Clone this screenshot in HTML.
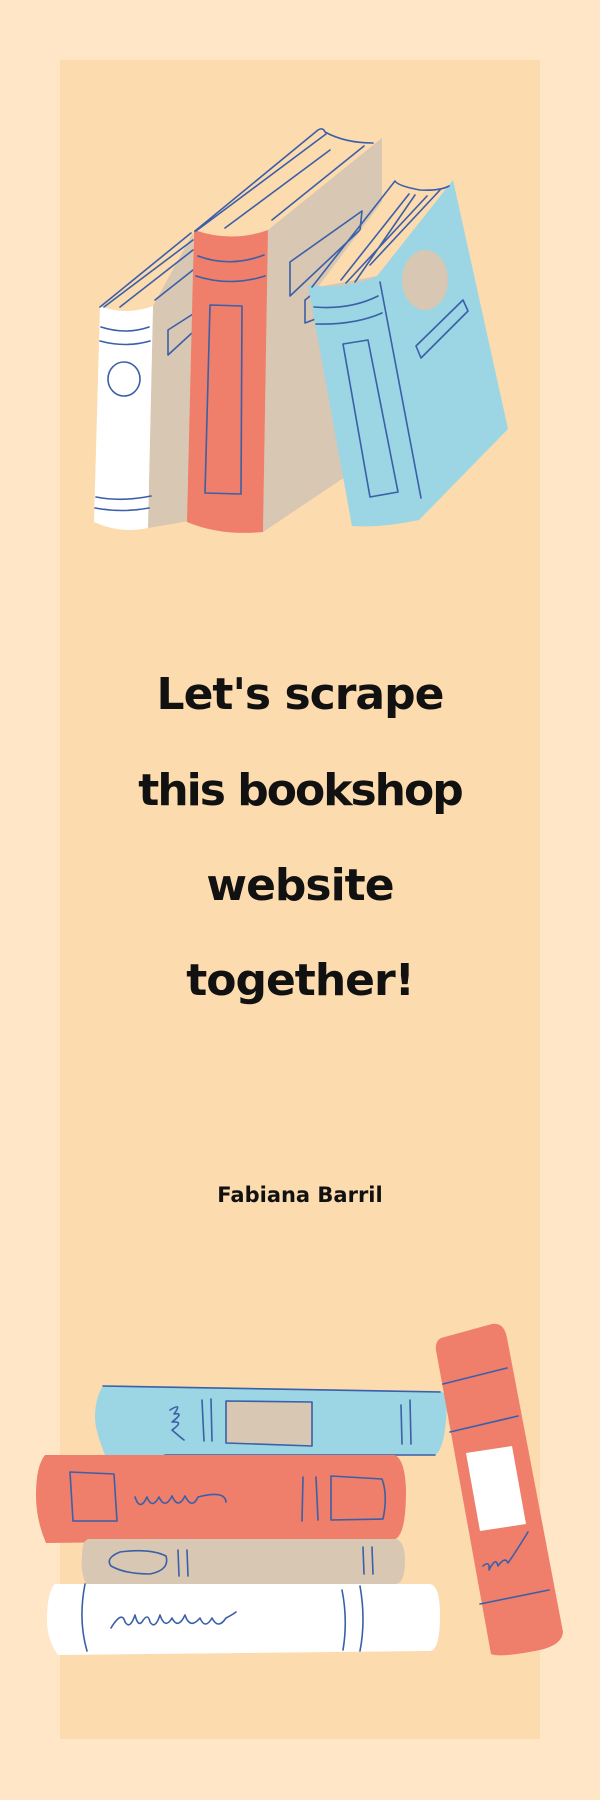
<!DOCTYPE html>
<html><head><meta charset="utf-8"><style>
html,body{margin:0;padding:0;background:#fee6c7;}
body{width:600px;height:1800px;position:relative;overflow:hidden;}
svg{position:absolute;left:0;top:0}
.t{position:absolute;left:60px;width:480px;text-align:center;font-family:"DejaVu Sans","Liberation Sans",sans-serif;font-weight:bold;color:#111;}
</style></head><body>
<svg width="600" height="1800" viewBox="0 0 600 1800">
<rect x="60" y="60" width="480" height="1679" fill="#fcdbae"/>
<g stroke="#3b5fa8" stroke-width="1.6" fill="none" stroke-linecap="round" stroke-linejoin="round">
<!-- white book -->
<polygon points="153,306 193,233 195,520 148,528" fill="#d8c7b2" stroke="none"/>
<path d="M100,306 Q126,316 153,306 L148,528 Q120,534 94,522 Z" fill="#fff" stroke="none"/>
<path d="M100,307 L191,233 M104,307 L193,240 M120,307 L193,250 M155,300 L193,270"/>
<path d="M101,327 Q126,335 149,327 M100,341 Q126,348 150,341 M96,497 Q122,502 151,496 M95,508 Q122,513 149,508"/>
<ellipse cx="124" cy="379" rx="16" ry="17"/>
<path d="M168,330 L193,314 L193,332 L168,355 Z"/>
<!-- red book tan cover -->
<polygon points="268,230 382,138 382,480 345,477 263,532" fill="#d8c7b2" stroke="none"/>
<path d="M194,230 Q232,243 268,230 L263,532 Q220,536 187,522 Z" fill="#ef7e6b" stroke="none"/>
<path d="M195,231 L318,130 Q323,127 325,132 Q345,143 373,143 M196,231 L326,134 M225,228 L330,150 M272,220 L364,146"/>
<path d="M198,256 Q230,268 264,255 M196,276 Q230,287 265,276"/>
<path d="M210,305 L242,306 L241,494 L205,493 Z"/>
<path d="M290,262 L362,211 L360,230 L290,296 Z"/>
<path d="M305,300 L314,293 L318,318 L305,323 Z"/>
<!-- blue book -->
<polygon points="318,287 396,183 450,186 377,276" fill="#fcdbae" stroke="none"/>
<path d="M308,285 Q345,290 377,276 L453,180 L508,429 L419,520 Q380,528 352,526 Z" fill="#9cd5e3" stroke="none"/>
<path d="M312,287 L395,181 Q398,186 420,190 Q440,191 449,186 M341,280 L409,194 M346,283 L427,196 M370,265 L440,190 M355,282 L415,195"/>
<ellipse cx="425" cy="280" rx="23" ry="30" fill="#d8c7b2" stroke="none"/>
<path d="M314,307 Q350,310 378,296 M316,324 Q355,325 382,313"/>
<path d="M343,344 L368,340 L398,492 L370,497 Z"/>
<path d="M380,282 L421,498"/>
<path d="M416,346 L463,300 L468,311 L421,358 Z"/>
<!-- bottom stack -->
<path d="M103,1386 L440,1391 Q447,1393 447,1405 Q445,1450 435,1455 L165,1455 L105,1455 Q95,1430 95,1418 Q95,1398 103,1386 Z" fill="#9cd5e3" stroke="none"/>
<path d="M103,1386 L440,1392 M165,1455 L435,1455"/>
<path d="M226,1401 L312,1402 L312,1446 L226,1443 Z" fill="#d8c7b2"/>
<path d="M202,1400 L204,1441 M211,1399 L212,1441 M401,1405 L402,1444 M410,1400 L411,1444"/>
<path d="M170,1410 Q183,1402 174,1414 Q185,1412 172,1422 Q185,1421 172,1430 Q180,1437 184,1440"/>
<path d="M45,1455 L395,1455 Q405,1460 406,1490 Q406,1535 395,1539 L46,1543 Q36,1520 36,1495 Q36,1466 45,1455 Z" fill="#ef7e6b" stroke="none"/>
<path d="M70,1472 L114,1474 L117,1521 L73,1521 Z"/>
<path d="M331,1476 L382,1479 Q388,1495 383,1519 L331,1520 Z"/>
<path d="M303,1477 L302,1521 M316,1477 L318,1520"/>
<path d="M135,1497 Q140,1512 147,1497 Q152,1510 159,1497 Q165,1510 172,1496 Q178,1510 185,1496 Q192,1510 198,1497 Q225,1490 226,1502"/>
<path d="M88,1539 L396,1539 Q405,1542 405,1560 Q405,1583 396,1584 L86,1584 Q80,1570 82,1556 Q82,1541 88,1539 Z" fill="#d8c7b2" stroke="none"/>
<path d="M120,1552 Q150,1548 166,1556 Q170,1570 150,1574 Q125,1574 111,1566 Q105,1558 120,1552 Z"/>
<path d="M178,1550 L179,1576 M187,1550 L188,1576 M363,1547 L364,1574 M372,1547 L373,1574"/>
<path d="M55,1584 L430,1584 Q440,1586 440,1615 Q440,1650 430,1651 L58,1655 Q47,1640 47,1620 Q47,1592 55,1584 Z" fill="#fff" stroke="none"/>
<path d="M85,1584 Q78,1620 87,1651 M342,1590 Q348,1620 343,1650 M360,1586 Q366,1620 360,1651"/>
<path d="M111,1628 Q122,1610 125,1622 Q130,1630 135,1615 Q138,1627 142,1622 Q148,1612 150,1622 Q155,1630 160,1615 Q165,1630 172,1618 Q178,1630 185,1615 Q190,1630 200,1618 Q205,1630 212,1618 Q218,1630 226,1618 Q232,1615 236,1612"/>
<path d="M441,1338 L492,1324 Q504,1322 507,1338 L563,1632 Q562,1645 540,1650 Q500,1658 491,1654 L436,1350 Q435,1341 441,1338 Z" fill="#ef7e6b" stroke="none"/>
<path d="M443,1384 L507,1368 M450,1432 L518,1416 M480,1604 L549,1590 M483,1566 Q490,1560 489,1570 Q496,1556 498,1566 Q505,1556 508,1563 Q517,1550 528,1532"/>
<polygon points="466,1453 512,1446 526,1524 480,1531" fill="#fff" stroke="none"/>
</g>
</svg>
<div class="t" style="top:669px;font-size:44px;letter-spacing:-1px">Let's scrape</div>
<div class="t" style="top:765px;font-size:44px;letter-spacing:-2px">this bookshop</div>
<div class="t" style="top:860px;font-size:44px;letter-spacing:-1px">website</div>
<div class="t" style="top:955px;font-size:44px;letter-spacing:-1px">together!</div>
<div class="t" style="top:1183px;font-size:21px;">Fabiana Barril</div>
</body></html>
